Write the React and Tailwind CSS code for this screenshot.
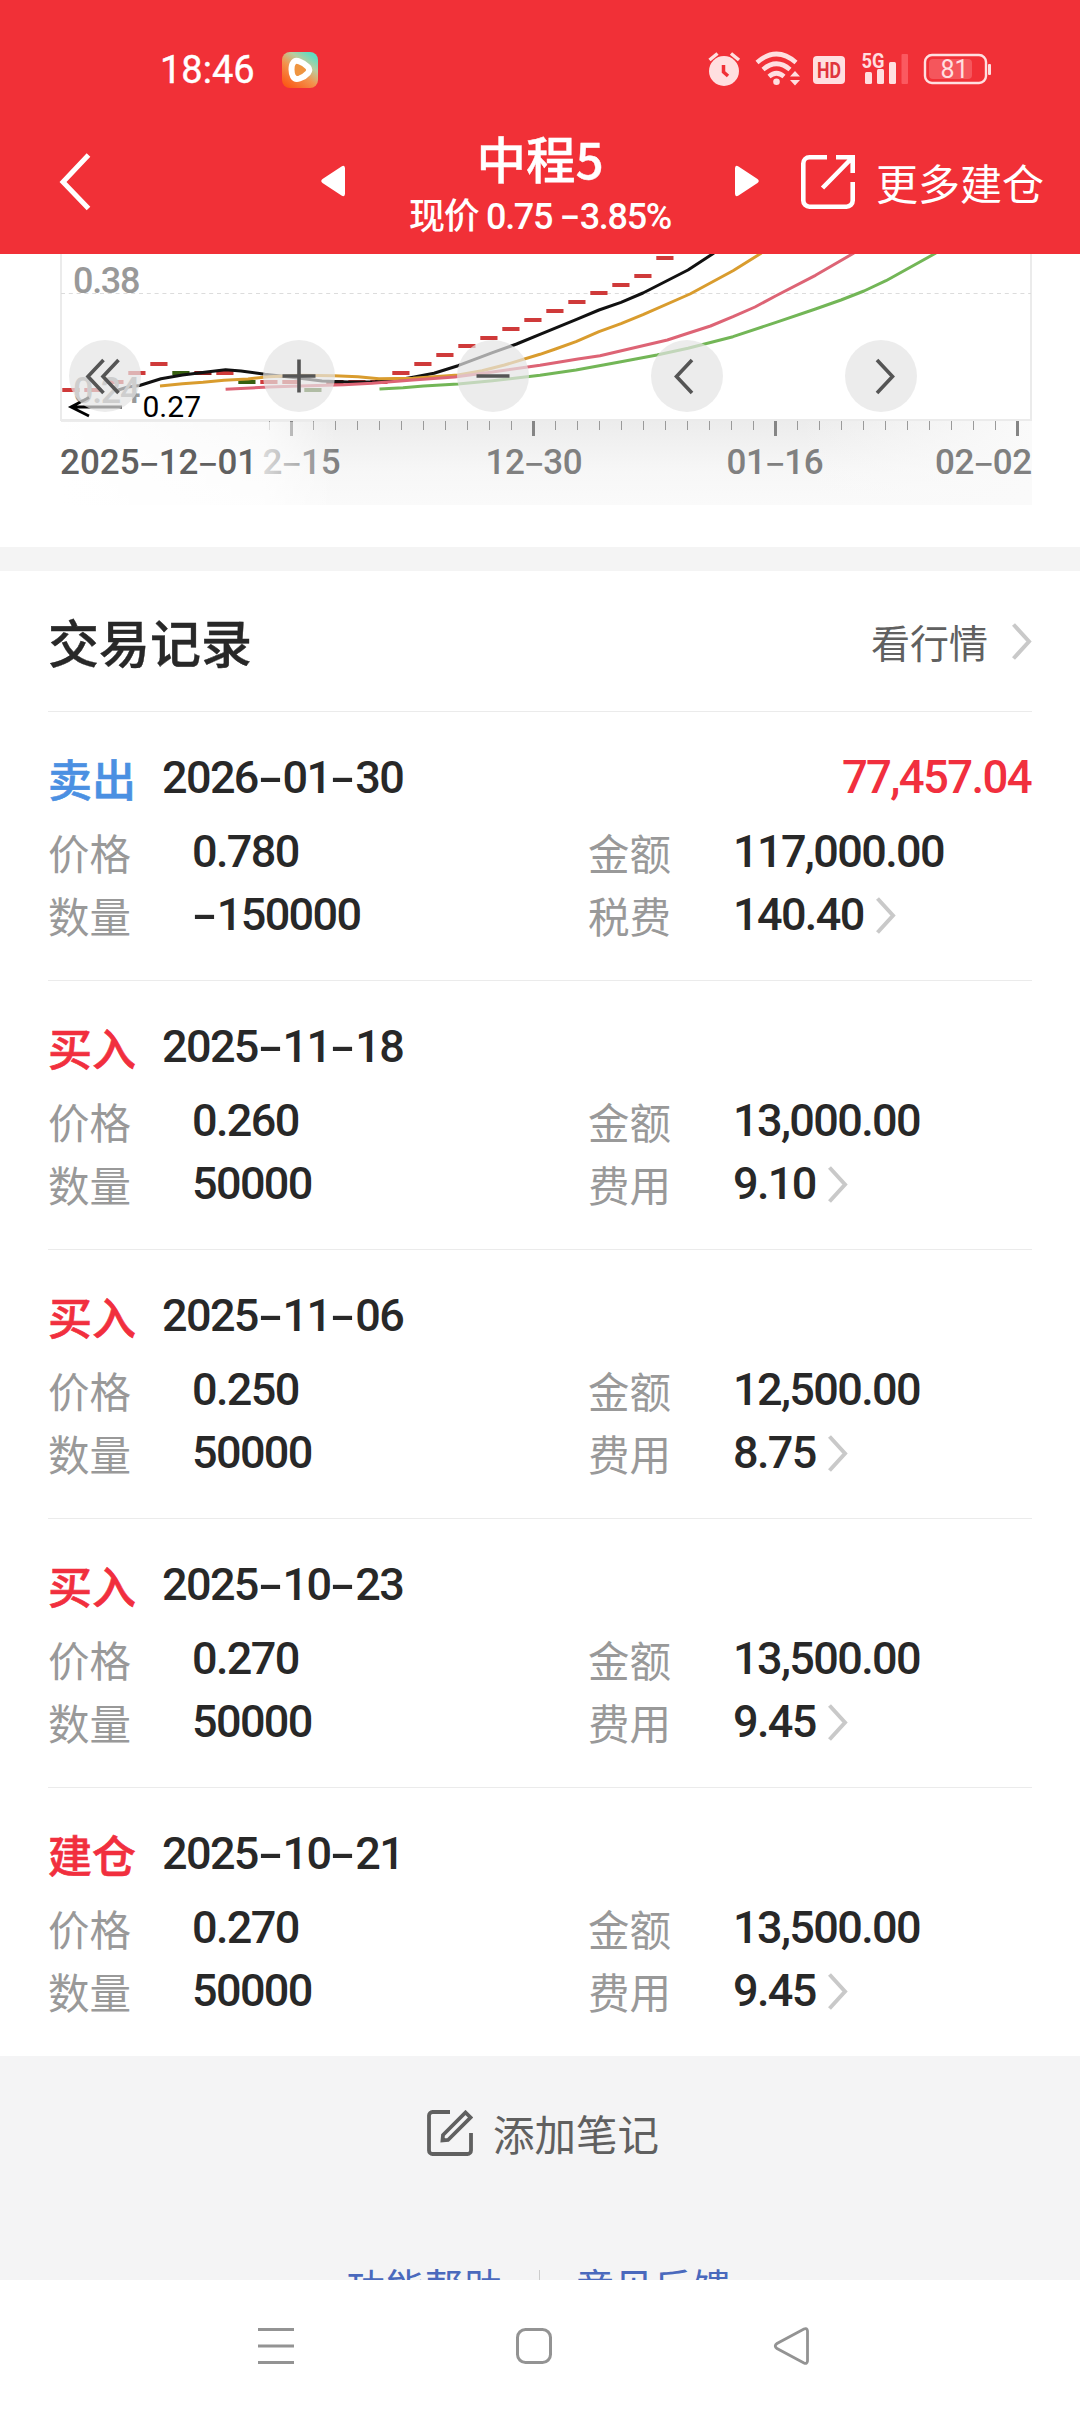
const NUM = 'font-[Roboto,"Noto_Sans_CJK_SC",sans-serif] font-medium tracking-[-0.036em]'

const RECORDS = [
  { type: '卖出', sell: true, date: '2026-01-30', profit: '77,457.04', price: '0.780', amount: '117,000.00', qty: '-150000', feeLabel: '税费', fee: '140.40' },
  { type: '买入', date: '2025-11-18', price: '0.260', amount: '13,000.00', qty: '50000', feeLabel: '费用', fee: '9.10' },
  { type: '买入', date: '2025-11-06', price: '0.250', amount: '12,500.00', qty: '50000', feeLabel: '费用', fee: '8.75' },
  { type: '买入', date: '2025-10-23', price: '0.270', amount: '13,500.00', qty: '50000', feeLabel: '费用', fee: '9.45' },
  { type: '建仓', date: '2025-10-21', price: '0.270', amount: '13,500.00', qty: '50000', feeLabel: '费用', fee: '9.45' },
]

// Daily closes, one bar every 22px. r = up, g = down, d = flat
const BARS = [
  [136, 'r'], [136, 'r'], [128, 'r'], [119, 'r'], [110, 'r'], [119, 'g'], [119, 'd'],
  [119, 'r'], [128, 'g'], [128, 'r'], [128, 'r'], [136, 'g'], [128, 'd'], [128, 'r'],
  [128, 'r'], [119, 'r'], [110, 'r'], [101, 'r'], [92, 'r'], [84, 'r'], [75, 'r'],
  [66, 'r'], [57, 'r'], [48, 'r'], [39, 'r'], [31, 'r'], [22, 'r'], [4, 'r'],
]
const BAR_FILL = { r: '#cf3a3a', g: '#376010', d: '#8c1a1a' }

const LINES = [
  { color: '#111111', d: '115,137 128,133 139.5,131.5 161,124.7 182.5,121 206.6,118 225.6,115.7 241,117 265,120.3 300,124.3 322,127 348,128 375,127.7 391,127 413,123.3 434,119.3 458,111.7 492.5,98.7 516.6,90 540,80.3 576,65.7 599,56 621,48.3 643,39 688,16 714,-1' },
  { color: '#d99c2e', d: '160,132 182.5,129.7 203,128.3 224,126.3 248,125 268.6,122.7 300,121.3 334,121.7 358,122.7 379,124.7 413,124.3 434,122.7 458,121 482,116.7 504.5,111 540,100.3 555.5,95 576,87.7 599,77.7 621,69.7 643,60.7 690,40 733,16.7 761.5,-1' },
  { color: '#dd6475', d: '225.6,135.3 268.6,133 300,132 344,130.7 372,129.3 413,126 454.6,123 492.5,118 540,111.3 578,105 600,101.7 667.4,86 688,79.3 710.5,72 733,62.7 755,53 776,41.7 815.5,21.3 854,-1' },
  { color: '#73b657', d: '379.5,135 403,133.7 423.6,132 458,130 492.5,126.7 540,121.3 576,116 621,107.7 657,101 688,94.3 733,82.7 776,68.3 815.5,55 841,46 864,37 886,26.7 936,-1' },
]

const TICKS = Array.from({ length: 35 }, (_, i) => 269.5 + i * 22)

const TOOLS = [
  { id: 'first', d: 'M34.5 20 19 36.5 34.5 53M49.5 20 34 36.5 49.5 53' },
  { id: 'zoom-in', d: 'M19.5 36h33M36 19.5v33' },
  { id: 'zoom-out', d: 'M19.5 36h33' },
  { id: 'prev', d: 'M41 20 25.5 36.5 41 53' },
  { id: 'next', d: 'M32 20 47.5 36.5 32 53' },
]

// Digits with the hyphen stretched to a full figure width
function Num({ children }) {
  return children.split('-').map((part, i) => (
    <span key={i}>
      {i > 0 && (
        <span className="inline-block w-[0.55em] text-center tracking-normal">
          <span className="inline-block scale-x-[1.65]">-</span>
        </span>
      )}
      {part}
    </span>
  ))
}

function Chevron() {
  return (
    <svg className="h-[38px] w-[20px]" viewBox="0 0 20 38" fill="none" stroke="#c9c9c9" strokeWidth="4">
      <path d="M1.5 2.5 17 19.5 1.5 36.5" />
    </svg>
  )
}

function StatusBar() {
  return (
    <div className="flex h-[90px] items-end justify-between pr-[89px] pl-[160px]">
      <div className="flex items-center gap-[27px]">
        <span className="font-[Roboto,sans-serif] text-[38px] leading-[40px] text-white [-webkit-text-stroke:0.4px]">18:46</span>
        <svg className="h-[36px] w-[36px]" viewBox="0 0 36 36">
          <defs>
            <linearGradient id="app" x1="0.2" y1="1" x2="0.85" y2="0.1">
              <stop offset="0" stopColor="#fb5a18" />
              <stop offset="0.45" stopColor="#f3934d" />
              <stop offset="0.75" stopColor="#b9cda0" />
              <stop offset="1" stopColor="#63dcc0" />
            </linearGradient>
          </defs>
          <rect width="36" height="36" rx="8" fill="url(#app)" />
          <path d="M11 11q2-3.500 6.500-1.500 5.500 2 8.500 5.500 2.500 3 0 6-3 3.500-8.500 5.500-4.500 1.500-6.500-2-1.500-3-1.500-7 0-4.500 1.500-6.500z" fill="#ef9440" stroke="#fff" strokeWidth="6" strokeLinejoin="round" />
        </svg>
      </div>
      <svg className="h-[40px] w-[284px]" viewBox="707 50 284 40" fill="#ffdfe0">
        {/* alarm */}
        <circle cx="724" cy="71" r="15" />
        <path d="M709.500 60 717.500 53.500M739 60 731 53.500" stroke="#ffdfe0" strokeWidth="3.500" />
        <path d="M723.500 65v7l4.500 4" fill="none" stroke="#f03037" strokeWidth="3.500" />
        {/* wifi */}
        <g fill="none" stroke="#ffdfe0" strokeWidth="4.600">
          <path d="M757 62.500q19.500-17 39 0" />
          <path d="M763 69.500q13.500-11.500 27 0" />
          <path d="M769 76.500q7.500-6.500 15 0" />
        </g>
        <circle cx="776.500" cy="81.800" r="3.300" />
        <path d="m795 71 5 5.500h-10zM795 85.500l5-5.500h-10z" />
        {/* hd */}
        <rect x="813" y="56" width="32" height="28" rx="4" />
        <text x="829" y="78" textAnchor="middle" fill="#e0353c" className="font-[Roboto,sans-serif] text-[22px] font-bold" textLength="24" lengthAdjust="spacingAndGlyphs">HD</text>
        {/* signal */}
        <text x="861.500" y="67.500" className="font-[Roboto,sans-serif] text-[21px] font-bold" textLength="23" lengthAdjust="spacingAndGlyphs">5G</text>
        <rect x="865" y="72" width="7" height="12" rx="1.500" />
        <rect x="877" y="69" width="7" height="15" rx="1.500" />
        <rect x="889" y="62" width="7" height="22" rx="1.500" />
        <rect x="901.500" y="54" width="6.500" height="30" rx="1" fill="#fb5960" />
        {/* battery */}
        <rect x="925" y="55" width="61" height="28" rx="7" fill="none" stroke="#ffdfe0" strokeWidth="2.400" />
        <rect x="929" y="59" width="43" height="20" rx="4" fill="#f5565c" />
        <rect x="988" y="64" width="3" height="11" rx="1" />
        <text x="954.500" y="78" textAnchor="middle" className="font-[Roboto,sans-serif] text-[25px]">81</text>
      </svg>
    </div>
  )
}

function Header() {
  return (
    <header className="h-[254px] shrink-0 bg-[#f13037] text-white">
      <StatusBar />
      <div className="flex h-[164px] items-center">
        <svg className="mt-[18px] ml-[58px] h-[60px] w-[34px]" viewBox="0 0 34 60" fill="none" stroke="#fff" strokeWidth="5">
          <path d="M30.500 4 5 31l25.500 26.500" />
        </svg>
        <svg className="mt-[18px] ml-[229px] h-[32px] w-[24px]" viewBox="0 0 24 32" fill="#fff">
          <path d="M20.500 1.500q3-2 3.500 1.500v26q-.5 3.500-3.500 1.500l-19-12.500q-2.500-2 0-4z" />
        </svg>
        <div className="ml-[40px] flex w-[310px] flex-col items-center pt-[34px]">
          <div className="text-[49.500px] leading-[56px] font-medium [-webkit-text-stroke:0.4px]">中程5</div>
          <div className={`text-[36px] leading-[62px] whitespace-pre ${NUM}`}>现价 <Num>0.75 -3.85%</Num></div>
        </div>
        <svg className="mt-[18px] ml-[40px] h-[32px] w-[24px]" viewBox="0 0 24 32" fill="#fff">
          <path d="M3.500 1.500Q.5-.5 0 3v26q.5 3.500 3.500 1.500l19-12.500q2.500-2 0-4z" />
        </svg>
        <svg className="mt-[20px] ml-[41px] h-[56px] w-[56px]" viewBox="0 0 56 56" fill="none" stroke="#fff" strokeWidth="4.600">
          <path d="M27 3.300H9.500a6.200 6.200 0 0 0-6.200 6.200v37a6.200 6.200 0 0 0 6.200 6.200h37a6.200 6.200 0 0 0 6.200-6.200V28M36 3.300h16.700V19M52 4 22.500 34" />
        </svg>
        <span className="mt-[20px] ml-[20px] text-[42px] leading-[50px]">更多建仓</span>
      </div>
    </header>
  )
}

function Chart() {
  return (
    <section className="relative h-[293px] shrink-0">
      <svg className="block h-[293px] w-[1080px]" viewBox="0 0 1080 293">
        <defs>
          <linearGradient id="axis" x1="0" y1="0" x2="0" y2="1">
            <stop offset="0" stopColor="#ececec" />
            <stop offset="0.6" stopColor="#f7f7f7" />
            <stop offset="1" stopColor="#fafafa" />
          </linearGradient>
          <linearGradient id="fade" x1="0" y1="0" x2="1" y2="0">
            <stop offset="0" stopColor="#fff" />
            <stop offset="0.740" stopColor="#fff" stopOpacity="0.700" />
            <stop offset="1" stopColor="#fff" stopOpacity="0" />
          </linearGradient>
          <linearGradient id="fadeRight" x1="0" y1="0" x2="1" y2="0">
            <stop offset="0" stopColor="#fafafa" stopOpacity="0" />
            <stop offset="1" stopColor="#fafafa" />
          </linearGradient>
        </defs>
        <rect x="61" y="167" width="971" height="84" fill="url(#axis)" />
        <rect x="800" y="167" width="232" height="84" fill="url(#fadeRight)" />
        {TICKS.map((x, i) =>
          i % 11 === 1
            ? <rect key={x} x={x - 1.5} y="167" width="3" height="15" fill="#858585" />
            : <rect key={x} x={x - 0.5} y="167" width="1" height="9" fill="#9a9a9a" />
        )}
        <g fill="#808080" textAnchor="middle" className={`text-[35px] ${NUM}`}>
          <text x="301" y="220" textLength="77">2‒15</text>
          <text x="533.500" y="220" textLength="96">12‒30</text>
          <text x="774.500" y="220" textLength="96">01‒16</text>
          <text x="983" y="220" textLength="96">02‒02</text>
        </g>
        <rect x="61" y="168" width="275" height="84" fill="url(#fade)" />
        <text x="60" y="220" fill="#606060" textLength="196" className={`text-[35px] ${NUM}`}>2025‒12‒01</text>

        <path d="M61 0v166H1031V0" fill="none" stroke="#ebebeb" strokeWidth="2" />
        <path d="M61 39.500H1031" stroke="#dcdcdc" strokeWidth="1" strokeDasharray="4 3.800" />
        {BARS.map(([y, kind], i) => (
          <rect key={i} x={62.3 + i * 22} y={y - 2} width="17.200" height="4" fill={BAR_FILL[kind]} />
        ))}
        {LINES.map(({ color, d }) => (
          <polyline key={color} points={d} fill="none" stroke={color} strokeWidth="3" strokeLinejoin="round" />
        ))}
        <g fill="#999999" className={`text-[36px] ${NUM}`}>
          <text x="73" y="39">0.38</text>
          <text x="73" y="149">0.24</text>
        </g>
        <path d="M122 153H71M89 143.500 71 153l18 9" fill="none" stroke="#000" strokeWidth="2.800" />
        <text x="142.500" y="163" fill="#000" className="font-[Roboto,sans-serif] text-[30px]">0.27</text>
      </svg>
      {/* floating chart controls */}
      <div className="absolute top-[86px] left-[69px] flex gap-[122px]">
        {TOOLS.map(({ id, d }) => (
          <svg key={id} className="h-[72px] w-[72px] rounded-full bg-[#e4e4e4]/70" viewBox="0 0 72 72" fill="none" stroke="#555" strokeWidth="3.600">
            <path d={d} />
          </svg>
        ))}
      </div>
    </section>
  )
}

function Label({ children }) {
  return <span className="pt-px text-[41.500px] leading-[62px] text-[#999]">{children}</span>
}

function Record({ r }) {
  return (
    <div className="h-[269px] border-t border-[#ebebeb] pt-[39px]">
      <div className="flex h-[54px] items-center">
        <span className={`w-[114px] text-[44px] leading-[54px] font-medium [-webkit-text-stroke:0.6px] ${r.sell ? 'text-[#4b90e2]' : 'text-[#f12f3e]'}`}>{r.type}</span>
        <span className={`text-[45px] leading-[48px] ${NUM}`}><Num>{r.date}</Num></span>
        {r.profit && <span className={`mr-px ml-auto text-[45.500px] leading-[48px] text-[#f12f3e] ${NUM}`}>{r.profit}</span>}
      </div>
      <div className="mt-[15px] grid grid-cols-[144px_396px_145px_1fr] items-center text-[45px] leading-[63px]">
        <Label>价格</Label>
        <span className={NUM}>{r.price}</span>
        <Label>金额</Label>
        <span className={NUM}>{r.amount}</span>
        <Label>数量</Label>
        <span className={NUM}><Num>{r.qty}</Num></span>
        <Label>{r.feeLabel}</Label>
        <span className={`flex items-center gap-[12px] ${NUM}`}>{r.fee}<Chevron /></span>
      </div>
    </div>
  )
}

function Records() {
  return (
    <section className="h-[1485px] shrink-0 px-[48px]">
      <div className="flex h-[140px] items-center justify-between">
        <h2 className="text-[51px] leading-[60px] font-medium [-webkit-text-stroke:0.4px]">交易记录</h2>
        <div className="flex items-center gap-[24px] text-[39px] leading-[54px] text-[#606060]">
          看行情 <Chevron />
        </div>
      </div>
      {RECORDS.map((r) => <Record key={r.date} r={r} />)}
    </section>
  )
}

function Footer() {
  return (
    <footer className="flex h-[224px] shrink-0 flex-col items-center overflow-hidden bg-[#f4f4f5]">
      <div className="mt-[49px] flex h-[56px] items-center gap-[20px] pl-[6px] text-[41.500px] text-[#606060]">
        <svg className="h-[46px] w-[46px]" viewBox="0 0 46 46" fill="none" stroke="#606060" strokeWidth="3.800">
          <path d="M23 2H5.500A3.500 3.500 0 0 0 2 5.500v35A3.500 3.500 0 0 0 5.500 44h35a3.500 3.500 0 0 0 3.500-3.500V23" />
          <path d="M15.500 30.500 16 25 38.500 2.500 43.500 7.500 21 30z" />
        </svg>
        添加笔记
      </div>
      <div className="mt-[96px] flex items-start pr-[2px] text-[39px] leading-[56px] text-[#4a69bd]">
        <span>功能帮助</span>
        <span className="mx-[36px] mt-[13px] h-[40px] w-px bg-[#ccc]" />
        <span>意见反馈</span>
      </div>
    </footer>
  )
}

function NavBar() {
  return (
    <nav className="flex h-[132px] shrink-0 items-center gap-[218px] pl-[256px]">
      <svg className="h-[40px] w-[40px]" viewBox="0 0 40 40" stroke="#939393" strokeWidth="3">
        <path d="M2 3.500h36M2 20h36M2 36.500h36" />
      </svg>
      <svg className="h-[40px] w-[40px]" viewBox="0 0 40 40" fill="none" stroke="#939393" strokeWidth="3">
        <rect x="3.500" y="3.500" width="33" height="33" rx="8" />
      </svg>
      <svg className="h-[40px] w-[40px]" viewBox="0 0 40 40" fill="none" stroke="#939393" strokeWidth="2.800">
        <path d="M35.500 5v30q-.5 3.500-3.500 2L5 22.500q-3.500-2.500 0-5L32 3q3-1.500 3.500 2z" />
      </svg>
    </nav>
  )
}

export default function App() {
  return (
    <div className='flex h-[2412px] w-[1080px] flex-col overflow-hidden bg-white font-["Noto_Sans_CJK_SC",sans-serif] text-[#282828]'>
      <Header />
      <Chart />
      <div className="h-[24px] shrink-0 bg-[#f4f4f4]" />
      <Records />
      <Footer />
      <NavBar />
    </div>
  )
}
